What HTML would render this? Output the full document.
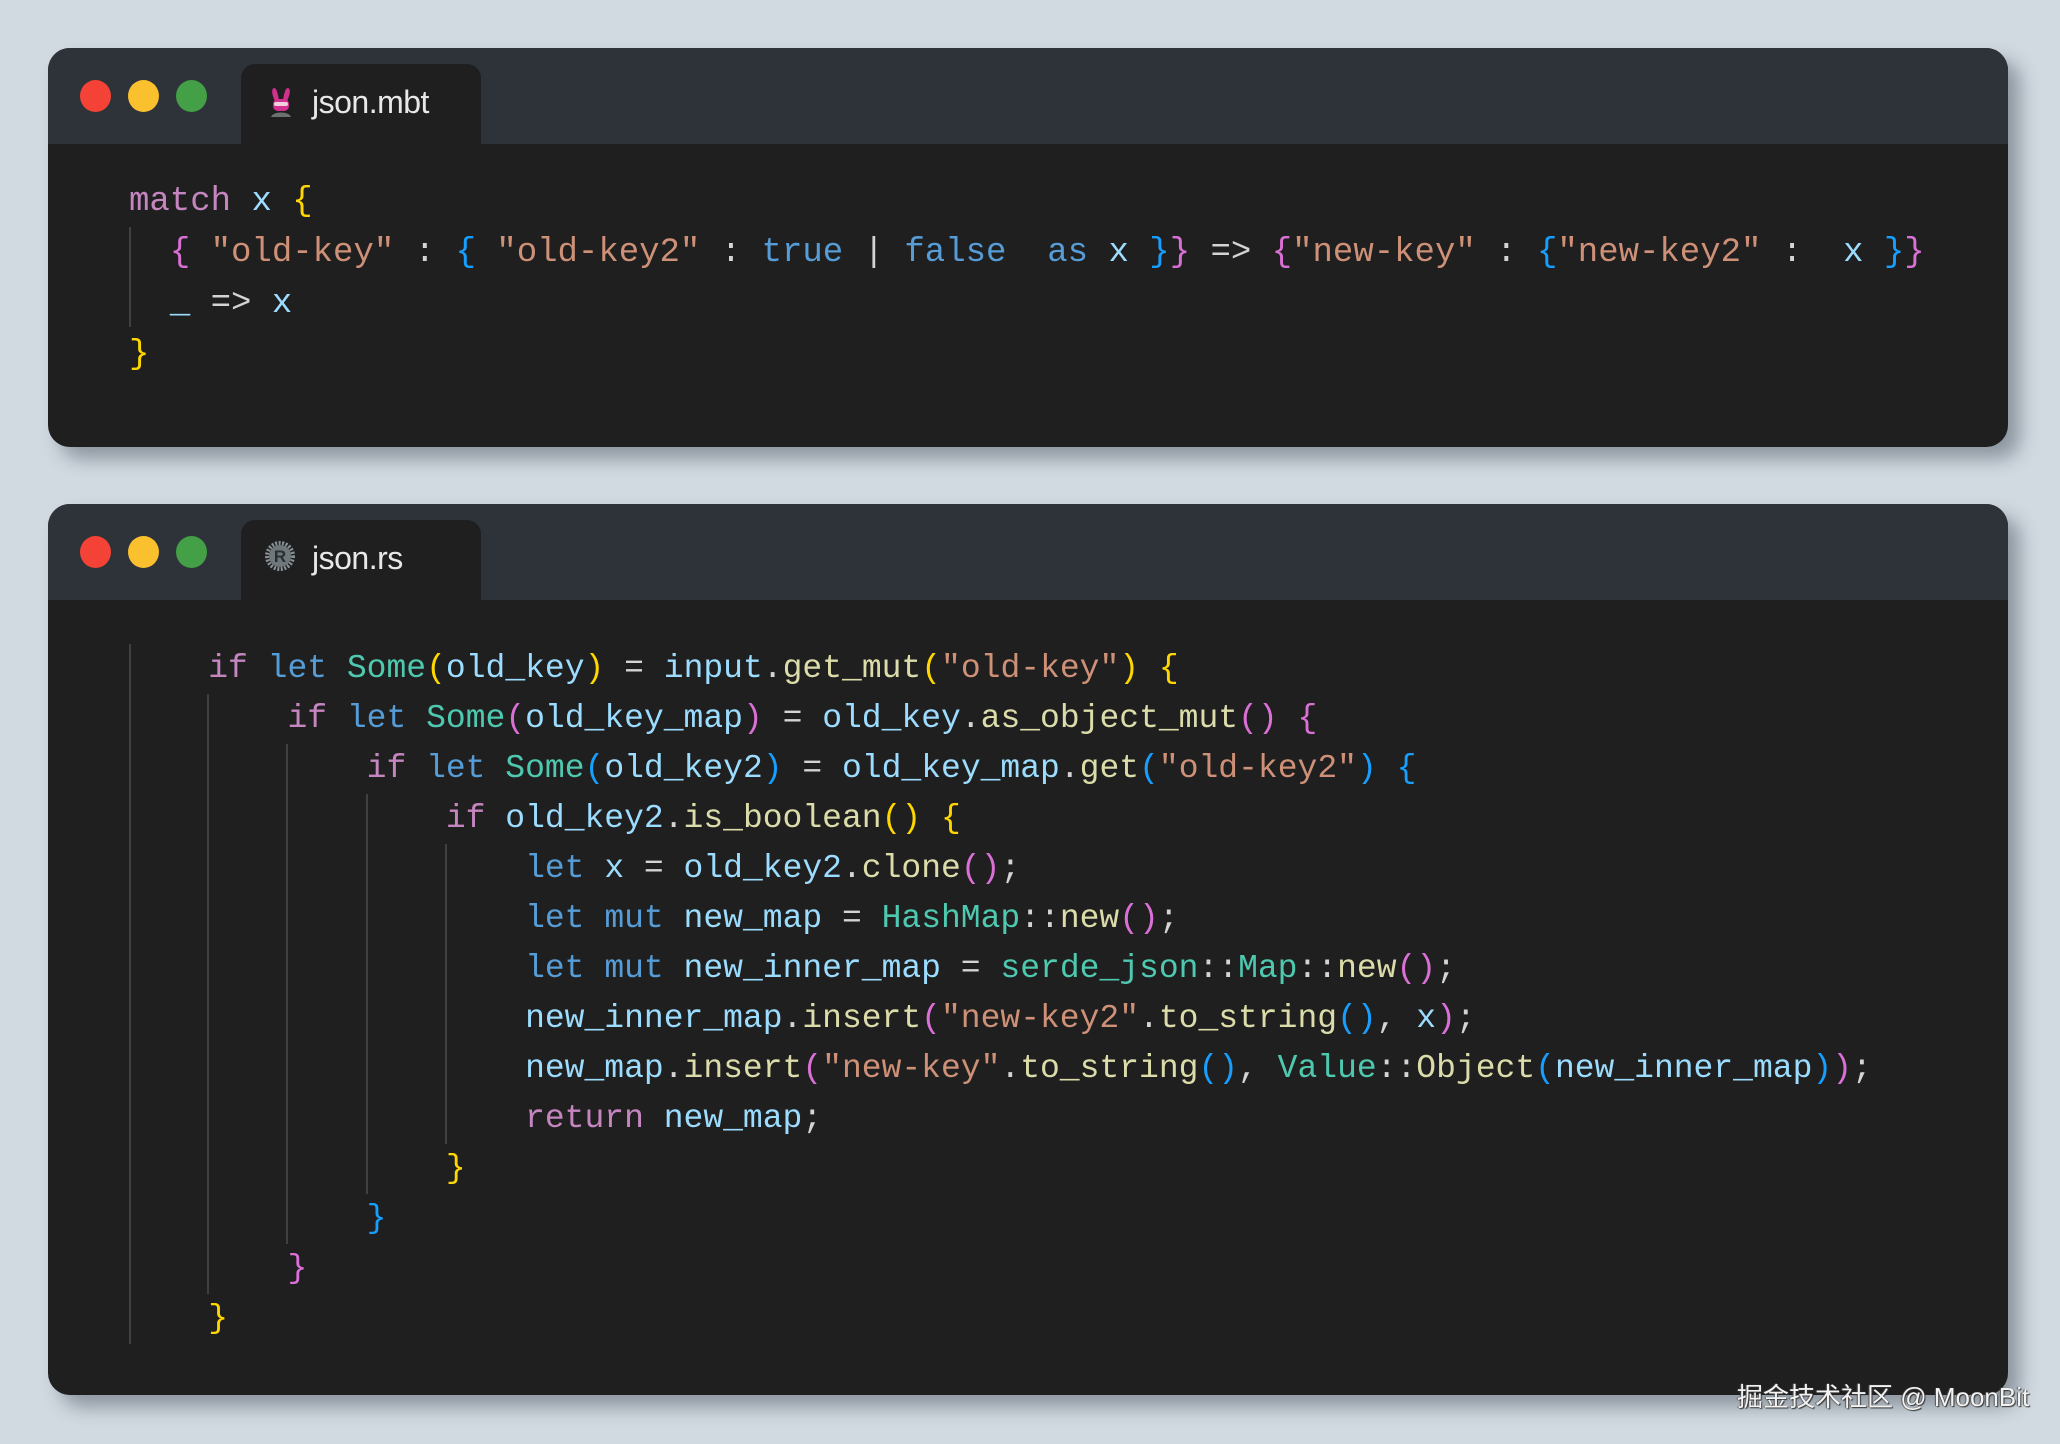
<!DOCTYPE html>
<html><head><meta charset="utf-8"><style>
body{margin:0;width:2060px;height:1444px;background:#d1d9e1;position:relative;overflow:hidden;font-family:"Liberation Sans",sans-serif}
.win{position:absolute;left:48px;width:1960px;background:#1f1f1f;border-radius:22px;overflow:hidden;box-shadow:12px 12px 18px rgba(60,70,80,0.45)}
.bar{position:absolute;left:0;top:0;right:0;height:96px;background:#2e333a}
.dot{position:absolute;top:32px;width:31px;height:32px;border-radius:50%}
.tab{position:absolute;left:193px;top:16px;width:240px;height:80px;background:#1f1f1f;border-radius:14px 14px 0 0}
.tab span{position:absolute;left:71px;top:20px;font-size:32px;color:#e8e8e8;letter-spacing:-0.5px}
pre{position:absolute;margin:0;font-family:"Liberation Mono",monospace;white-space:pre;color:#d4d4d4}
.g{position:absolute;width:2px;background:#404040}
.k{color:#c586c0}.b{color:#569cd6}.v{color:#9cdcfe}.s{color:#ce9178}.t{color:#4ec9b0}.f{color:#dcdcaa}
.y{color:#ffd700}.p{color:#da70d6}.c{color:#179fff}
</style></head><body>
<div class="win" style="top:48px;height:399px">
 <div class="bar"></div>
 <div class="dot" style="left:32px;background:#f44336"></div>
 <div class="dot" style="left:80px;background:#fbc02d"></div>
 <div class="dot" style="left:128px;background:#43a047"></div>
 <div class="tab">
  <svg style="position:absolute;left:27px;top:23px" width="26" height="32" viewBox="0 0 26 32">
   <path d="M7 14 C4 8 3 2 6 1 C9 1 10 8 11 13 Z M19 14 C22 8 23 2 20 1 C17 1 16 8 15 13 Z" fill="#d1308f"/>
   <rect x="5" y="12" width="16" height="12" rx="5" fill="#d1308f"/>
   <rect x="6" y="15" width="14" height="4" rx="2" fill="#f0d0e0"/>
   <path d="M3 30 C5 24 21 24 23 30 Z" fill="#6b7070"/>
  </svg>
  <span>json.mbt</span>
 </div>
 <div class="g" style="left:81px;top:179px;height:100px"></div>
 <pre style="left:81px;top:129px;font-size:34px;line-height:51px"><span class="k">match</span> <span class="v">x</span> <span class="y">{</span>
  <span class="p">{</span> <span class="s">"old-key"</span> : <span class="c">{</span> <span class="s">"old-key2"</span> : <span class="b">true</span> | <span class="b">false</span>  <span class="b">as</span> <span class="v">x</span> <span class="c">}</span><span class="p">}</span> =&gt; <span class="p">{</span><span class="s">"new-key"</span> : <span class="c">{</span><span class="s">"new-key2"</span> :  <span class="v">x</span> <span class="c">}</span><span class="p">}</span>
  <span class="v">_</span> =&gt; <span class="v">x</span>
<span class="y">}</span></pre>
</div>

<div class="win" style="top:504px;height:891px">
 <div class="bar"></div>
 <div class="dot" style="left:32px;background:#f44336"></div>
 <div class="dot" style="left:80px;background:#fbc02d"></div>
 <div class="dot" style="left:128px;background:#43a047"></div>
 <div class="tab">
  <svg style="position:absolute;left:23px;top:20px" width="32" height="32" viewBox="0 0 32 32">
   <circle cx="16" cy="16" r="13" fill="none" stroke="#8a9296" stroke-width="4" stroke-dasharray="2 1.5"/>
   <circle cx="16" cy="16" r="11" fill="#6e777b"/>
   <text x="16" y="22" text-anchor="middle" font-family="Liberation Sans" font-weight="bold" font-size="17" fill="#2a2e30">R</text>
  </svg>
  <span>json.rs</span>
 </div>
 <div class="g" style="left:81px;top:140px;height:700px"></div>
 <div class="g" style="left:159px;top:190px;height:600px"></div>
 <div class="g" style="left:238px;top:240px;height:500px"></div>
 <div class="g" style="left:318px;top:290px;height:400px"></div>
 <div class="g" style="left:397px;top:340px;height:300px"></div>
 <pre style="left:81px;top:140px;font-size:33px;line-height:50px">    <span class="k">if</span> <span class="b">let</span> <span class="t">Some</span><span class="y">(</span><span class="v">old_key</span><span class="y">)</span> = <span class="v">input</span>.<span class="f">get_mut</span><span class="y">(</span><span class="s">"old-key"</span><span class="y">)</span> <span class="y">{</span>
        <span class="k">if</span> <span class="b">let</span> <span class="t">Some</span><span class="p">(</span><span class="v">old_key_map</span><span class="p">)</span> = <span class="v">old_key</span>.<span class="f">as_object_mut</span><span class="p">()</span> <span class="p">{</span>
            <span class="k">if</span> <span class="b">let</span> <span class="t">Some</span><span class="c">(</span><span class="v">old_key2</span><span class="c">)</span> = <span class="v">old_key_map</span>.<span class="f">get</span><span class="c">(</span><span class="s">"old-key2"</span><span class="c">)</span> <span class="c">{</span>
                <span class="k">if</span> <span class="v">old_key2</span>.<span class="f">is_boolean</span><span class="y">()</span> <span class="y">{</span>
                    <span class="b">let</span> <span class="v">x</span> = <span class="v">old_key2</span>.<span class="f">clone</span><span class="p">()</span>;
                    <span class="b">let</span> <span class="b">mut</span> <span class="v">new_map</span> = <span class="t">HashMap</span>::<span class="f">new</span><span class="p">()</span>;
                    <span class="b">let</span> <span class="b">mut</span> <span class="v">new_inner_map</span> = <span class="t">serde_json</span>::<span class="t">Map</span>::<span class="f">new</span><span class="p">()</span>;
                    <span class="v">new_inner_map</span>.<span class="f">insert</span><span class="p">(</span><span class="s">"new-key2"</span>.<span class="f">to_string</span><span class="c">()</span>, <span class="v">x</span><span class="p">)</span>;
                    <span class="v">new_map</span>.<span class="f">insert</span><span class="p">(</span><span class="s">"new-key"</span>.<span class="f">to_string</span><span class="c">()</span>, <span class="t">Value</span>::<span class="f">Object</span><span class="c">(</span><span class="v">new_inner_map</span><span class="c">)</span><span class="p">)</span>;
                    <span class="k">return</span> <span class="v">new_map</span>;
                <span class="y">}</span>
            <span class="c">}</span>
        <span class="p">}</span>
    <span class="y">}</span></pre>
</div>

<div style="position:absolute;left:1737px;top:1377px;font-family:'Liberation Sans','Noto Sans CJK SC',sans-serif;font-size:26px;color:#f2f2f2;text-shadow:1px 1px 1px #333,-1px 0 1px #555;white-space:nowrap">掘金技术社区 @ MoonBit</div>
</body></html>
